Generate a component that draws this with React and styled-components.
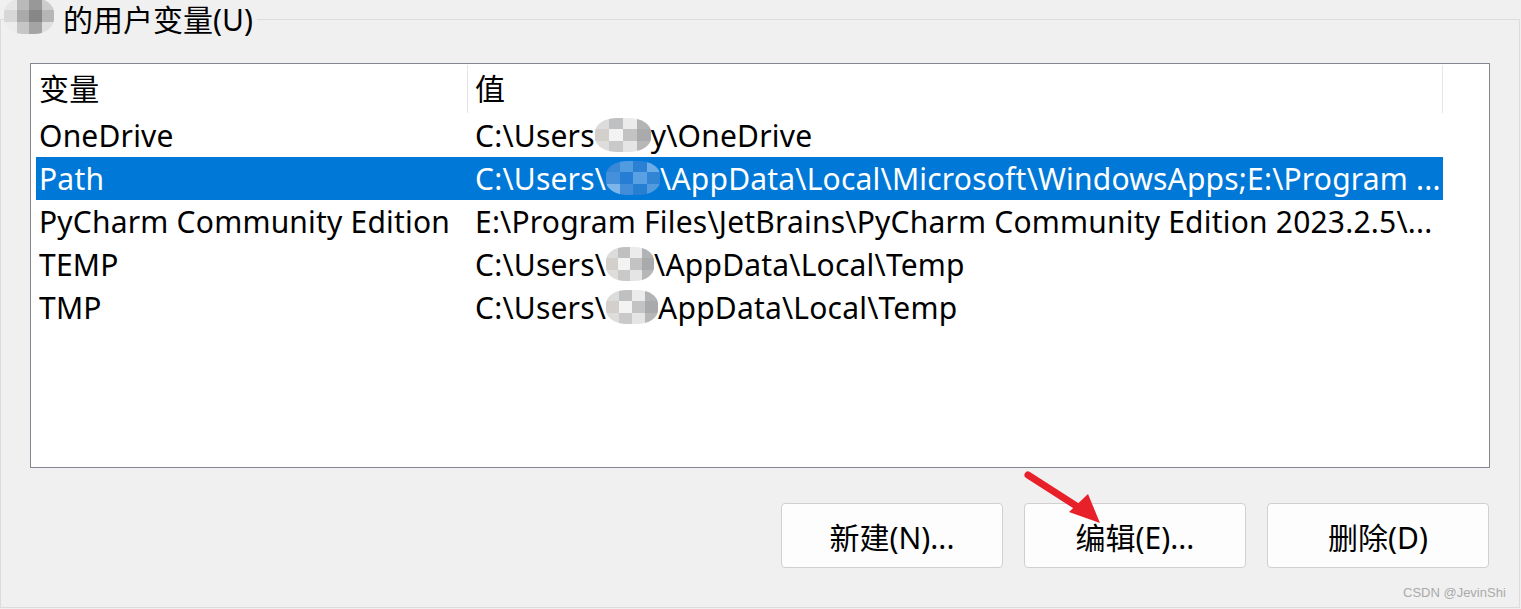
import React from "react"
import styled, { createGlobalStyle } from "styled-components"

const GRAY = ["#d9d9d9", "#b9babc", "#e9e9e9", "#a9abae", "#cfcac6", "#f2f2f2", "#bdbdbd", "#9fa1a4", "#dcdad8", "#c4c4c4", "#e3e3e3", "#b0b0b0"]
const DARK = ["#e6e6e6", "#b4b4b4", "#8f8f8f", "#c9c9c9", "#d5d5d5", "#a3a3a3", "#7c7c7c", "#b0b0b0", "#ececec", "#c2c2c2", "#9c9c9c", "#dedede"]
const BLUE = ["#3f8ad6", "#5aa0e2", "#2f82d4", "#78b3ea", "#4c93dc", "#2a7fd3", "#63a6e4", "#3887d5", "#8bbdee", "#4a90da", "#2c80d3", "#5d9fe0"]

const rows = [
  { name: "OneDrive", pre: "C:\\Users", blob: 56, post: "y\\OneDrive" },
  {
    name: "Path",
    pre: "C:\\Users\\",
    blob: 54,
    post: "\\AppData\\Local\\Microsoft\\WindowsApps;E:\\Program ...",
    selected: true,
  },
  {
    name: "PyCharm Community Edition",
    pre: "E:\\Program Files\\JetBrains\\PyCharm Community Edition 2023.2.5\\...",
  },
  { name: "TEMP", pre: "C:\\Users\\", blob: 48, post: "\\AppData\\Local\\Temp" },
  { name: "TMP", pre: "C:\\Users\\", blob: 52, post: "AppData\\Local\\Temp" },
]

const Mosaic = ({ width, height, palette }) => (
  <MosaicGrid $w={width} $h={height}>
    {palette.map((c, i) => (
      <Cell key={i} $c={c} />
    ))}
  </MosaicGrid>
)

const App = () => {
  return (
    <Page>
      <GlobalStyle />
      <Group>
        <Legend>
          <Mosaic width={50} height={36} palette={DARK} />
          <span>的用户变量(U)</span>
        </Legend>
        <ListBox>
          <Header>
            <HeadCell $w={432}>变量</HeadCell>
            <HeadCell $w={975}>值</HeadCell>
          </Header>
          {rows.map((row) => (
            <Row key={row.name} $selected={row.selected}>
              <NameCell>{row.name}</NameCell>
              <ValueCell>
                {row.pre}
                {row.blob && (
                  <Mosaic
                    width={row.blob}
                    height={34}
                    palette={row.selected ? BLUE : GRAY}
                  />
                )}
                {row.post}
              </ValueCell>
            </Row>
          ))}
        </ListBox>
        <Buttons>
          <Button>新建(N)...</Button>
          <Button>编辑(E)...</Button>
          <Button>删除(D)</Button>
        </Buttons>
      </Group>
      <Arrow width="100" height="70" viewBox="0 0 100 70">
        <line x1="13" y1="10" x2="66" y2="44" stroke="#e8202a" strokeWidth="7" strokeLinecap="round" />
        <polygon points="85,58 73,29 54,47" fill="#e8202a" />
      </Arrow>
      <Watermark>CSDN @JevinShi</Watermark>
    </Page>
  )
}

export default App

const GlobalStyle = createGlobalStyle`
  html, body {
    margin: 0;
    padding: 0;
    background: #f0f0f0;
  }
  body {
    font-family: "Noto Sans", "Noto Sans CJK SC", sans-serif;
    color: #000;
  }
`

const Page = styled.div`
  position: relative;
  width: 1521px;
  height: 609px;
  overflow: hidden;
  padding-top: 19px;
  box-sizing: border-box;
`

const Group = styled.div`
  position: relative;
  box-sizing: border-box;
  width: 1520px;
  height: 589px;
  border: 1px solid #dcdcdc;
  padding: 43px 29px 0 29px;
`

const Legend = styled.div`
  position: absolute;
  left: 3px;
  top: -20px;
  display: flex;
  align-items: center;
  gap: 9px;
  height: 40px;
  padding-right: 4px;
  background: #f0f0f0;
  font-size: 30px;
  line-height: 40px;
`

const MosaicGrid = styled.span`
  display: inline-grid;
  grid-template-columns: repeat(4, 1fr);
  grid-template-rows: repeat(3, 1fr);
  width: ${(p) => p.$w}px;
  height: ${(p) => p.$h}px;
  vertical-align: middle;
  margin-top: -8px;
  border-radius: 40%;
  overflow: hidden;
  opacity: 0.9;
`

const Cell = styled.span`
  background: ${(p) => p.$c};
`

const ListBox = styled.div`
  box-sizing: border-box;
  height: 405px;
  border: 1px solid #828790;
  background: #fff;
  padding-left: 5px;
  font-size: 30px;
  letter-spacing: 0.2px;
`

const Header = styled.div`
  display: flex;
  height: 50px;
`

const HeadCell = styled.div`
  position: relative;
  box-sizing: border-box;
  width: ${(p) => p.$w}px;
  padding-left: ${(p) => (p.$w > 500 ? 7 : 3)}px;
  line-height: 50px;

  &::after {
    content: "";
    position: absolute;
    right: 0;
    top: 1px;
    bottom: 1px;
    width: 1px;
    background: #e5e5e5;
  }
`

const Row = styled.div`
  display: grid;
  grid-template-columns: 432px 975px;
  width: 1407px;
  height: 43px;
  line-height: 43px;
  background: ${(p) => (p.$selected ? "#0078d7" : "transparent")};
  color: ${(p) => (p.$selected ? "#fff" : "#000")};
`

const NameCell = styled.div`
  padding-left: 3px;
  white-space: nowrap;
  overflow: hidden;
`

const ValueCell = styled.div`
  padding-left: 7px;
  white-space: nowrap;
  overflow: hidden;
`

const Buttons = styled.div`
  display: flex;
  justify-content: flex-end;
  gap: 21px;
  margin-top: 35px;
  margin-right: 1px;
`

const Button = styled.button`
  box-sizing: border-box;
  width: 222px;
  height: 65px;
  border: 1px solid #d0d0d0;
  border-radius: 4px;
  background: #fdfdfd;
  font-family: "Noto Sans", "Noto Sans CJK SC", sans-serif;
  font-size: 30px;
  color: #000;
  padding: 0;
`

const Arrow = styled.svg`
  position: absolute;
  left: 1015px;
  top: 465px;
`

const Watermark = styled.div`
  position: absolute;
  left: 1403px;
  top: 585px;
  font-family: "Liberation Sans", Arial, sans-serif;
  font-size: 13px;
  color: #aaaaaa;
`
